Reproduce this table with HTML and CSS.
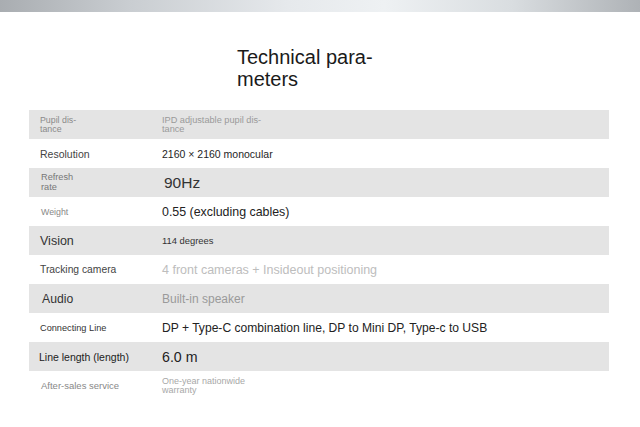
FILE: index.html
```html
<!DOCTYPE html>
<html>
<head>
<meta charset="utf-8">
<link rel="stylesheet" href="styles.css">
</head>
<body>
<div class="topbar"></div>
<h1 class="title"><span>Technical para-</span><span>meters</span></h1>
<div class="specs">
  <div class="row alt">
    <div class="label l-pupil">Pupil dis-<br>tance</div>
    <div class="value v-pupil">IPD adjustable pupil dis-<br>tance</div>
  </div>
  <div class="row">
    <div class="label l-res">Resolution</div>
    <div class="value v-res">2160 × 2160 monocular</div>
  </div>
  <div class="row alt">
    <div class="label l-refresh">Refresh<br>rate</div>
    <div class="value v-refresh">90Hz</div>
  </div>
  <div class="row">
    <div class="label l-weight">Weight</div>
    <div class="value v-weight">0.55 (excluding cables)</div>
  </div>
  <div class="row alt">
    <div class="label l-vision">Vision</div>
    <div class="value v-vision">114 degrees</div>
  </div>
  <div class="row">
    <div class="label l-track">Tracking camera</div>
    <div class="value v-track">4 front cameras + Insideout positioning</div>
  </div>
  <div class="row alt">
    <div class="label l-audio">Audio</div>
    <div class="value v-audio">Built-in speaker</div>
  </div>
  <div class="row">
    <div class="label l-conn">Connecting Line</div>
    <div class="value v-conn">DP + Type-C combination line, DP to Mini DP, Type-c to USB</div>
  </div>
  <div class="row alt">
    <div class="label l-len">Line length (length)</div>
    <div class="value v-len">6.0 m</div>
  </div>
  <div class="row">
    <div class="label l-after">After-sales service</div>
    <div class="value v-after">One-year nationwide<br>warranty</div>
  </div>
</div>
</body>
</html>
```
FILE: styles.css
```css
html, body {
  margin: 0;
  padding: 0;
  background: #ffffff;
}
body {
  width: 640px;
  height: 427px;
  overflow: hidden;
  font-family: "Liberation Sans", Arial, sans-serif;
  color: #222;
}
.topbar {
  height: 12px;
  background: linear-gradient(to right, #a9adb1 0%, #c9cdd1 20%, #e6e9ec 45%, #eef1f3 60%, #d9dde0 80%, #aeb2b6 100%);
}
.title {
  margin: 34px 0 0 237px;
  font-weight: normal;
  font-size: 20px;
  line-height: 22px;
  color: #1a1a1a;
}
.title span {
  display: block;
}
.specs {
  margin: 20px 31px 0 29px;
}
.row {
  display: grid;
  grid-template-columns: 133px 1fr;
  align-items: center;
  height: 29px;
}
.row.alt {
  background: #e4e4e4;
}
.label {
  padding-left: 11px;
}
.value {
  padding-left: 0;
}
.l-pupil { font-size: 8.8px; line-height: 9px; color: #8a8a8a; }
.v-pupil { font-size: 9.2px; line-height: 9px; color: #9a9a9a; }
.l-res { font-size: 10.5px; color: #444; }
.v-res { font-size: 10.5px; color: #1e1e1e; }
.l-refresh { font-size: 9.2px; line-height: 9.5px; color: #777; padding-left: 12px; }
.v-refresh { font-size: 15.5px; color: #333; padding-left: 2px; }
.l-weight { font-size: 8.8px; color: #888; padding-left: 12px; }
.v-weight { font-size: 12.4px; color: #222; }
.l-vision { font-size: 12.5px; color: #333; }
.v-vision { font-size: 9.4px; color: #333; }
.l-track { font-size: 10.3px; color: #444; }
.v-track { font-size: 12.5px; color: #bdbdbd; }
.l-audio { font-size: 12.2px; color: #333; padding-left: 13px; }
.v-audio { font-size: 12px; color: #9a9a9a; }
.l-conn { font-size: 9.2px; color: #333; }
.v-conn { font-size: 12.1px; color: #222; }
.l-len { font-size: 10.5px; color: #222; padding-left: 10px; }
.v-len { font-size: 14.2px; color: #222; }
.l-after { font-size: 9.5px; color: #888; padding-left: 12px; }
.v-after { font-size: 9px; line-height: 9px; color: #a8a8a8; }
```
